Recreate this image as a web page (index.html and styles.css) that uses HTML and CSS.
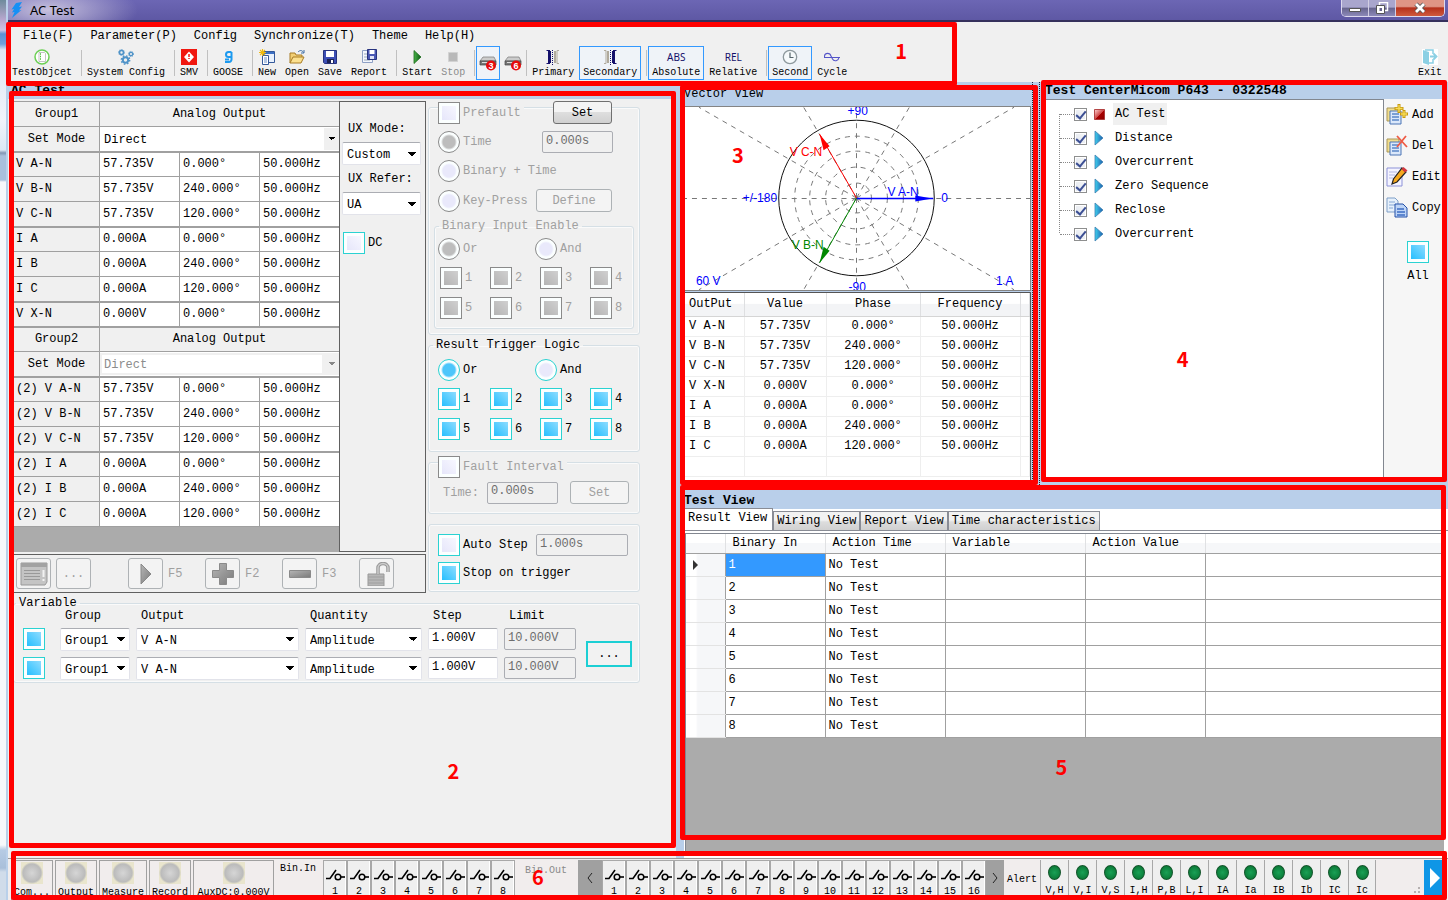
FILE: index.html
```html
<!DOCTYPE html>
<html lang="en">
<head>
<meta charset="utf-8">
<title>AC Test</title>
<link rel="stylesheet" href="styles.css">
</head>
<body>
<svg class="defs" aria-hidden="true">
  <defs>
    <linearGradient id="gPlay" x1="0" x2="1"><stop offset="0" stop-color="#3fd0ee"/><stop offset="1" stop-color="#1d5fae"/></linearGradient>
    <linearGradient id="gStart" x1="0" x2="1"><stop offset="0" stop-color="#49b449"/><stop offset="1" stop-color="#0a5a14"/></linearGradient>
    <linearGradient id="gGrey" x1="0" y1="0" x2="1" y2="1"><stop offset="0" stop-color="#b5b5b5"/><stop offset="1" stop-color="#7a7a7a"/></linearGradient>
    <linearGradient id="gRed" x1="0" y1="0" x2="1" y2="1"><stop offset="0" stop-color="#ffd9d9"/><stop offset=".5" stop-color="#d04848"/><stop offset=".52" stop-color="#a80000"/><stop offset="1" stop-color="#8a0000"/></linearGradient>
    <symbol id="switch" viewBox="0 0 20 14"><path d="M1 10.500h4L11 2" fill="none" stroke="#000" stroke-width="1.6"/><circle cx="13" cy="9" r="2.800" fill="none" stroke="#000" stroke-width="1.500"/><path d="M16 9h4" stroke="#000" stroke-width="1.600"/></symbol>
    <symbol id="play" viewBox="0 0 10 16"><path d="M1 1v14l8-7z" fill="url(#gPlay)" stroke="#3d7fb0" stroke-width=".8"/></symbol>
    <symbol id="pages" viewBox="0 0 22 22"><path d="M1 4h12v13H1z" fill="#f1dd8c" stroke="#a9975a"/><path d="M4 7h11v13H4z" fill="#dbe8fa" stroke="#4b74b5"/><path d="M6 10h7M6 13h7M6 16h7" stroke="#5b86c7" stroke-width="1.500"/></symbol>
    <symbol id="drive" viewBox="0 0 18 16"><path d="M4 2h11l2 4H1z" fill="#ccc" stroke="#777" stroke-width=".7"/><path d="M1 6h16v4H1z" fill="#777" stroke="#444" stroke-width=".7"/><path d="M3 7.500h6" stroke="#ddd"/><circle cx="12" cy="10.500" r="5" fill="#e60b0b"/></symbol>
  </defs>
</svg>

<div class="desktop">
  <div class="edge"></div>
  <div class="window">
    <header class="titlebar">
      <svg class="bolt" viewBox="0 0 12 16"><path d="M5 1l6-1-3 5 3-.5-3 4 2.500-.5L1 16l2.500-6L1 10.500 3 7 .5 7.500z" fill="#1690f5"/></svg>
      <h1 class="title">AC Test</h1>
      <div class="winbtns">
        <button class="wb" aria-label="Minimize"><svg viewBox="0 0 14 12"><path d="M1.500 6.500h11v3h-11z" fill="#fff" stroke="#555"/></svg></button>
        <button class="wb wb-mid" aria-label="Restore"><svg viewBox="0 0 14 12"><path d="M4.500.5h8v8h-8z" fill="none" stroke="#fff" stroke-width="1.500"/><path d="M1.500 3.500h8v8h-8z" fill="#fff" stroke="#555"/><path d="M4.500 6h2.500v3H4.500z" fill="#67648e"/></svg></button>
        <button class="wb wb-close" aria-label="Close"><svg viewBox="0 0 14 12"><path d="M3 2l8 8M11 2l-8 8" stroke="#555" stroke-width="4.500"/><path d="M3 2l8 8M11 2l-8 8" stroke="#fff" stroke-width="2.800"/></svg></button>
      </div>
    </header>

    <section class="top">
      <nav class="menu">
        <button>File(F)</button><button>Parameter(P)</button><button>Config</button><button>Synchronize(T)</button><button>Theme</button><button>Help(H)</button>
      </nav>
      <div class="toolbar">
        <button class="tool"><svg viewBox="0 0 16 16"><circle cx="8" cy="8" r="7" fill="#fff" stroke="#6ccf55" stroke-width="1.500"/><path d="M5 3.500h5.500l1 1v8H5z" fill="#fff" stroke="#aaa" stroke-width=".7"/><path d="M6 5h1M6 7.500h1M6 10h1" stroke="#4bbf3a" stroke-width="1.500"/></svg>TestObjcet</button>
        <i class="sep"></i>
        <button class="tool"><svg viewBox="0 0 16 16" fill="none" stroke="#4f93c8"><circle cx="3.500" cy="3.500" r="2" stroke-width="1.600"/><circle cx="3.500" cy="3.500" r="3" stroke-dasharray="1 1.300"/><circle cx="13" cy="5" r="1.700" stroke-width="1.300"/><circle cx="13" cy="5" r="2.600" stroke-dasharray="1 1.100"/><circle cx="7.500" cy="11" r="2.700" stroke-width="2"/><circle cx="7.500" cy="11" r="4.200" stroke-dasharray="1.600 1.700" stroke-width="1.400"/></svg>System Config</button>
        <i class="sep"></i>
        <button class="tool"><svg viewBox="0 0 16 16"><path d="M0 0h16v16H0z" fill="#f0170f"/><path d="M8 2.500L13 8l-5 5.500L3 8z" fill="#fff"/><path d="M8 5v6" stroke="#f0170f" stroke-width="1.500" stroke-dasharray="3 1 1 1"/></svg>SMV</button>
        <i class="sep"></i>
        <button class="tool"><svg viewBox="0 0 16 16"><path d="M11.500 3H8.500a2.500 2.500 0 0 0 0 5h3M11.500 3v7.500a2.500 2.500 0 0 1-2.500 2.500H5M5 10.500h4" fill="none" stroke="#1c9af0" stroke-width="2"/></svg>GOOSE</button>
        <i class="sep"></i>
        <button class="tool"><svg viewBox="0 0 16 16"><path d="M4.500 2.500h11v11h-11z" fill="#e8f1fd" stroke="#34599a"/><path d="M5 3h10v2H5z" fill="#3b6fc4"/><path d="M3.500 6.500h6v9h-6z" fill="#fff" stroke="#34599a"/><path d="M5 9h3M5 11h3M5 13h3" stroke="#6b8fc7"/><path d="M3.500 0v7M0 3.500h7M1 1l5 5M6 1L1 6" stroke="#f0b90c" stroke-width="1.100"/></svg>New</button>
        <button class="tool"><svg viewBox="0 0 16 16"><path d="M1 14V4h5l1 2h6v2" fill="#f2cf74" stroke="#a87c26"/><path d="M1 14l3-6h11l-3 6z" fill="#fbe08f" stroke="#a87c26"/><path d="M9 3c2-2 4-2 5.500.5M15 1v3h-3" fill="none" stroke="#3c6da5"/></svg>Open</button>
        <button class="tool"><svg viewBox="0 0 16 16"><path d="M1.500 1.500h13v13h-12l-1-1z" fill="#3d4fb5" stroke="#27337e"/><path d="M4 2h8v6H4z" fill="#fff"/><path d="M5 10h7v4H5z" fill="#1b2254"/><path d="M9 11h2v3H9z" fill="#fff"/></svg>Save</button>
        <button class="tool"><svg viewBox="0 0 16 16"><path d="M1.500 1.500h10v12h-10z" fill="#f3f6fc" stroke="#8ea0c4"/><path d="M3 5h3M3 8h4M3 11h6" stroke="#9ab"/><path d="M6.500.5h9v10h-9z" fill="#4a58b4" stroke="#27337e"/><path d="M8.500 1h5v4h-5z" fill="#fff"/><path d="M9 7h4v3H9z" fill="#dfe3f5"/></svg>Report</button>
        <i class="sep"></i>
        <button class="tool"><svg viewBox="0 0 16 16"><path d="M5 1.500v13l7-6.500z" fill="url(#gStart)" stroke="#1a6a1a" stroke-width=".8"/></svg>Start</button>
        <button class="tool" disabled><svg viewBox="0 0 16 16"><path d="M3.500 3.500h9v9h-9z" fill="#b9b9b9" stroke="#d2d2d2"/></svg>Stop</button>
        <i class="sep"></i>
        <button class="tool tool-drive on" aria-label="3 phase"><svg viewBox="0 0 18 16"><use href="#drive"/><text x="12" y="14" class="drive-no">3</text></svg></button>
        <button class="tool tool-drive" aria-label="6 phase"><svg viewBox="0 0 18 16"><use href="#drive"/><text x="12" y="14" class="drive-no">6</text></svg></button>
        <i class="sep tight"></i>
        <button class="tool"><svg viewBox="0 0 16 16"><path d="M1.500 1.500H5M1.500 14.500H5" stroke="#14106b"/><path d="M4.500 2v12" stroke="#14106b" stroke-width="3"/><path d="M7.500 1v15" stroke="#14106b" stroke-dasharray="1 1"/><path d="M10 2v12" stroke="#b0aa9c" stroke-width="2"/><path d="M14 1.500h-2v13h2" fill="none" stroke="#b0aa9c"/></svg>Primary</button>
        <button class="tool on"><svg viewBox="0 0 16 16"><path d="M2 1.500h2v13H2" fill="none" stroke="#b0aa9c"/><path d="M6 2v12" stroke="#b0aa9c" stroke-width="2"/><path d="M8.500 1v15" stroke="#14106b" stroke-dasharray="1 1"/><path d="M11.500 2v12" stroke="#14106b" stroke-width="3"/><path d="M11 1.500h3.500M11 14.500h3.500" stroke="#14106b"/></svg>Secondary</button>
        <i class="sep"></i>
        <button class="tool on"><span class="word">ABS</span>Absolute</button>
        <button class="tool"><span class="word">REL</span>Relative</button>
        <i class="sep"></i>
        <button class="tool on"><svg viewBox="0 0 16 16"><circle cx="8" cy="8" r="6.700" fill="#f5f9fb" stroke="#8d989d" stroke-width="1.300"/><path d="M8 3.500V8.500h3.500" fill="none" stroke="#56646b" stroke-width="1.200"/></svg>Second</button>
        <button class="tool"><svg viewBox="0 0 16 16"><path d="M.5 8.500V7C1 3.500 6 3.500 7 7l1.500 3c1.500 3 6 2 6.500-1.500M0 8.500h16" fill="none" stroke="#5555c8" stroke-width="1.100"/></svg>Cycle</button>
        <button class="tool exit"><svg viewBox="0 0 16 16"><path d="M0 0h16v16H0z" fill="#fff"/><path d="M1 1l6 2v13l-6-2z" fill="#8bd0e4"/><path d="M3 1h8v4M11 10v4H7" fill="none" stroke="#8bd0e4" stroke-width="1.500"/><path d="M8 7.500h5M11.500 4.500l3 3-3 3" fill="none" stroke="#8bd0e4" stroke-width="1.800"/></svg>Exit</button>
      </div>
      <div class="frame frame-1"><b>1</b></div>
    </section>

    <main class="main">
      <section class="pane left">
        <h2 class="bar">AC Test</h2>
        <div class="left-body">
          <div class="col-a">
            <div class="analog">
              <div class="grid-wrap">
                <table class="ana">
                  <colgroup><col class="c0"><col class="c1"><col class="c1"><col class="c1"></colgroup>
                  <tr><th class="mid">Group1</th><th class="mid" colspan="3">Analog Output</th></tr>
                  <tr class="thick"><th class="mid"><label for="m1">Set Mode</label></th><td colspan="3" class="modecell"><select id="m1" class="mode"><option>Direct</option></select></td></tr>
                  <tr><th>V A-N</th><td>57.735V</td><td>0.000°</td><td>50.000Hz</td></tr>
                  <tr><th>V B-N</th><td>57.735V</td><td>240.000°</td><td>50.000Hz</td></tr>
                  <tr class="thick"><th>V C-N</th><td>57.735V</td><td>120.000°</td><td>50.000Hz</td></tr>
                  <tr><th>I A</th><td>0.000A</td><td>0.000°</td><td>50.000Hz</td></tr>
                  <tr><th>I B</th><td>0.000A</td><td>240.000°</td><td>50.000Hz</td></tr>
                  <tr class="thick"><th>I C</th><td>0.000A</td><td>120.000°</td><td>50.000Hz</td></tr>
                  <tr class="thick"><th>V X-N</th><td>0.000V</td><td>0.000°</td><td>50.000Hz</td></tr>
                  <tr><th class="mid">Group2</th><th class="mid" colspan="3">Analog Output</th></tr>
                  <tr class="thick"><th class="mid"><label for="m2">Set Mode</label></th><td colspan="3" class="modecell"><select id="m2" class="mode" disabled><option>Direct</option></select></td></tr>
                  <tr><th>(2) V A-N</th><td>57.735V</td><td>0.000°</td><td>50.000Hz</td></tr>
                  <tr><th>(2) V B-N</th><td>57.735V</td><td>240.000°</td><td>50.000Hz</td></tr>
                  <tr class="thick"><th>(2) V C-N</th><td>57.735V</td><td>120.000°</td><td>50.000Hz</td></tr>
                  <tr><th>(2) I A</th><td>0.000A</td><td>0.000°</td><td>50.000Hz</td></tr>
                  <tr><th>(2) I B</th><td>0.000A</td><td>240.000°</td><td>50.000Hz</td></tr>
                  <tr><th>(2) I C</th><td>0.000A</td><td>120.000°</td><td>50.000Hz</td></tr>
                </table>
              </div>
              <div class="ux">
                <label for="uxm">UX Mode:</label>
                <select id="uxm" class="sel"><option>Custom</option></select>
                <label for="uxr">UX Refer:</label>
                <select id="uxr" class="sel"><option>UA</option></select>
                <label class="ck dc"><input type="checkbox">DC</label>
              </div>
            </div>
            <div class="actions">
              <button class="act" disabled aria-label="Details"><svg viewBox="0 0 28 24"><path d="M1 1h26v19l-2 3H1z" fill="#c4c4c4" stroke="#999"/><path d="M1 1h26v4H1z" fill="#a2a2a2"/><path d="M4 8.500h16M4 11.500h16M4 14.500h16M4 17.500h16" stroke="#999"/><path d="M23.500 8v7M23.500 17v2" stroke="#f1f1f1" stroke-width="2"/></svg></button>
              <button class="act" disabled>...</button>
              <span class="pair first"><button class="act" disabled aria-label="Run"><svg viewBox="0 0 28 24"><path d="M9 2v20l10-10z" fill="url(#gGrey)" stroke="#888"/></svg></button>F5</span>
              <span class="pair"><button class="act" disabled aria-label="Increase"><svg viewBox="0 0 28 24"><path d="M10.500 1.500h7v7h7v7h-7v7h-7v-7h-7v-7h7z" fill="url(#gGrey)" stroke="#8a8a8a"/></svg></button>F2</span>
              <span class="pair"><button class="act" disabled aria-label="Decrease"><svg viewBox="0 0 28 24"><path d="M3.500 8.500h21v7h-21z" fill="url(#gGrey)" stroke="#8a8a8a"/></svg></button>F3</span>
              <button class="act" disabled aria-label="Unlock"><svg viewBox="0 0 28 24"><path d="M5 12h16v12H5z" fill="#b7b7b7" stroke="#999"/><path d="M5 15h16M5 18h16M5 21h16" stroke="#9f9f9f"/><path d="M15 12V6a5 4.500 0 0 1 10 0v4" fill="none" stroke="#999" stroke-width="3.500"/><path d="M15 12V6a5 4.500 0 0 1 10 0v4" fill="none" stroke="#ccc" stroke-width="1.500"/></svg></button>
            </div>
          </div>

          <div class="col-b">
            <div class="group g-pre">
              <div class="row headrow"><label class="ck off w82"><input type="checkbox" disabled>Prefault</label><button class="btn w59">Set</button></div>
              <div class="row"><label class="rd off w104"><input type="radio" name="pre" checked disabled>Time</label><input class="txt w71" type="text" value="0.000s" aria-label="Prefault time" disabled></div>
              <div class="row"><label class="rd off"><input type="radio" name="pre" disabled>Binary + Time</label></div>
              <div class="row"><label class="rd off w98"><input type="radio" name="pre" disabled>Key-Press</label><button class="btn w76" disabled>Define</button></div>
              <fieldset class="inner">
                <legend>Binary Input Enable</legend>
                <div class="pairrow"><label class="rd off"><input type="radio" name="bi" checked disabled>Or</label><label class="rd off"><input type="radio" name="bi" disabled>And</label></div>
                <div class="boxes off">
                  <label class="ck"><input type="checkbox" checked disabled>1</label><label class="ck"><input type="checkbox" checked disabled>2</label><label class="ck"><input type="checkbox" checked disabled>3</label><label class="ck"><input type="checkbox" checked disabled>4</label>
                  <label class="ck"><input type="checkbox" checked disabled>5</label><label class="ck"><input type="checkbox" checked disabled>6</label><label class="ck"><input type="checkbox" checked disabled>7</label><label class="ck"><input type="checkbox" checked disabled>8</label>
                </div>
              </fieldset>
            </div>
            <fieldset class="group g-res">
              <legend>Result Trigger Logic</legend>
              <div class="pairrow"><label class="rd"><input type="radio" name="rt" checked>Or</label><label class="rd"><input type="radio" name="rt">And</label></div>
              <div class="boxes">
                <label class="ck"><input type="checkbox" checked>1</label><label class="ck"><input type="checkbox" checked>2</label><label class="ck"><input type="checkbox" checked>3</label><label class="ck"><input type="checkbox" checked>4</label>
                <label class="ck"><input type="checkbox" checked>5</label><label class="ck"><input type="checkbox" checked>6</label><label class="ck"><input type="checkbox" checked>7</label><label class="ck"><input type="checkbox" checked>8</label>
              </div>
            </fieldset>
            <div class="group g-fault">
              <div class="row headrow"><label class="ck off"><input type="checkbox" disabled>Fault Interval</label></div>
              <div class="row faultrow"><label class="off" for="ft">Time:</label><input id="ft" class="txt w71" type="text" value="0.000s" disabled><button class="btn w59" disabled>Set</button></div>
            </div>
            <div class="group g-auto">
              <div class="row"><label class="ck w98"><input type="checkbox">Auto Step</label><input class="txt w92" type="text" value="1.000s" aria-label="Auto step time" disabled></div>
              <div class="row"><label class="ck"><input type="checkbox" checked>Stop on trigger</label></div>
            </div>
          </div>
        </div>

        <fieldset class="variable">
          <legend>Variable</legend>
          <div class="vgrid">
            <span></span><span>Group</span><span>Output</span><span>Quantity</span><span>Step</span><span>Limit</span><span></span>
            <label class="ck"><input type="checkbox" checked aria-label="Variable 1"></label>
            <select class="sel" aria-label="Group"><option>Group1</option></select>
            <select class="sel" aria-label="Output"><option>V A-N</option></select>
            <select class="sel" aria-label="Quantity"><option>Amplitude</option></select>
            <input class="txt plain" type="text" value="1.000V" aria-label="Step">
            <input class="txt" type="text" value="10.000V" aria-label="Limit" disabled>
            <label class="ck"><input type="checkbox" checked aria-label="Variable 2"></label>
            <select class="sel" aria-label="Group"><option>Group1</option></select>
            <select class="sel" aria-label="Output"><option>V A-N</option></select>
            <select class="sel" aria-label="Quantity"><option>Amplitude</option></select>
            <input class="txt plain" type="text" value="1.000V" aria-label="Step">
            <input class="txt" type="text" value="10.000V" aria-label="Limit" disabled>
            <button class="more">...</button>
          </div>
        </fieldset>
        <div class="frame frame-2"><b>2</b></div>
      </section>

      <div class="right">
        <div class="upper">
          <section class="pane vector">
            <h2 class="bar bar-tall">Vector View</h2>
            <svg class="plot" viewBox="0 0 347 183">
              <g fill="none" stroke="#777" stroke-dasharray="5 5">
                <circle cx="173" cy="91" r="15"/><circle cx="173" cy="91" r="31"/><circle cx="173" cy="91" r="47"/><circle cx="173" cy="91" r="62"/>
                <path d="M173 91.500H347M173 91.500H0M173 91V0M173 91V183M173 91L331 0M173 91L15 0M173 91L331 183M173 91L15 183M173 91L226 0M173 91L120 0M173 91L226 183M173 91L120 183"/>
              </g>
              <circle cx="173" cy="91" r="78" fill="none" stroke="#111"/>
              <path d="M173 91.500H250" stroke="#00f" stroke-width="1.500"/><path d="M249 91.500l-17-3v6z" fill="#00f"/>
              <path d="M173 91L136 27" stroke="#f00"/><path d="M136 27l10 12-6 4z" fill="#f00"/>
              <path d="M173 91L136 156" stroke="#080"/><path d="M136 156l10-12-6-4z" fill="#080"/>
              <g class="deg">
                <text x="164" y="8">+90</text><text x="165" y="184">-90</text><text x="59" y="95">+/-180</text><text x="258" y="95">0</text><text x="12" y="178">60 V</text><text x="313" y="178">1 A</text><text x="204" y="89">V A-N</text>
                <text x="106" y="49" class="red">V C-N</text><text x="108" y="142" class="green">V B-N</text>
              </g>
            </svg>
            <div class="vlist">
              <table class="vt">
                <colgroup><col class="v0"><col class="v1"><col class="v2"><col class="v3"><col></colgroup>
                <tr><th class="l">OutPut</th><th>Value</th><th>Phase</th><th>Frequency</th><th></th></tr>
                <tr><td class="l">V A-N</td><td>57.735V</td><td>0.000°</td><td>50.000Hz</td><td></td></tr>
                <tr><td class="l">V B-N</td><td>57.735V</td><td>240.000°</td><td>50.000Hz</td><td></td></tr>
                <tr><td class="l">V C-N</td><td>57.735V</td><td>120.000°</td><td>50.000Hz</td><td></td></tr>
                <tr><td class="l">V X-N</td><td>0.000V</td><td>0.000°</td><td>50.000Hz</td><td></td></tr>
                <tr><td class="l">I A</td><td>0.000A</td><td>0.000°</td><td>50.000Hz</td><td></td></tr>
                <tr><td class="l">I B</td><td>0.000A</td><td>240.000°</td><td>50.000Hz</td><td></td></tr>
                <tr><td class="l">I C</td><td>0.000A</td><td>120.000°</td><td>50.000Hz</td><td></td></tr>
                <tr><td></td><td></td><td></td><td></td><td></td></tr>
              </table>
            </div>
            <div class="frame frame-3"><b>3</b></div>
          </section>
          <section class="pane center">
            <h2 class="bar">Test CenterMicom P643 - 0322548</h2>
            <div class="center-body">
              <ul class="tree">
                <li><label><input type="checkbox" checked><svg viewBox="0 0 12 12" class="stopico"><path d="M.5.5h11v11H.5z" fill="url(#gRed)" stroke="#a33"/></svg><span class="cur">AC Test</span></label></li>
                <li><label><input type="checkbox" checked><svg class="playico"><use href="#play"/></svg><span>Distance</span></label></li>
                <li><label><input type="checkbox" checked><svg class="playico"><use href="#play"/></svg><span>Overcurrent</span></label></li>
                <li><label><input type="checkbox" checked><svg class="playico"><use href="#play"/></svg><span>Zero Sequence</span></label></li>
                <li><label><input type="checkbox" checked><svg class="playico"><use href="#play"/></svg><span>Reclose</span></label></li>
                <li><label><input type="checkbox" checked><svg class="playico"><use href="#play"/></svg><span>Overcurrent</span></label></li>
              </ul>
              <div class="side">
                <button><svg viewBox="0 0 22 22"><use href="#pages"/><path d="M13 0v9M8.500 4.500h9M18 6v8M14 10h8" stroke="#c79a10" stroke-width="3"/><path d="M13 1v7M9.500 4.500h7M18 7v6M15 10h6" stroke="#f7dc55" stroke-width="1.300"/></svg>Add</button>
                <button><svg viewBox="0 0 22 22"><use href="#pages"/><path d="M11 1l10 11M20 1l-9 11" stroke="#ee5b45" stroke-width="1.800"/></svg>Del</button>
                <button><svg viewBox="0 0 22 22"><path d="M1 2h15v18H1z" fill="#f4f4ff" stroke="#8d92d8"/><path d="M3 6h8M3 9h6M3 12h4" stroke="#b4b8e2"/><path d="M16 2l4 4-9 10-5 2 1.500-5z" fill="#f6a91e" stroke="#222" stroke-width="1.200"/><path d="M15.500 3l2-2 4 3.500-2.500 2z" fill="#d2383e"/></svg>Edit</button>
                <button><svg viewBox="0 0 22 22"><path d="M1 1h8l3 3v11H1z" fill="#e6f0fb" stroke="#7f9fc8"/><path d="M3 5h6M3 8h6M3 11h4" stroke="#86a8d6"/><path d="M9 7h8l4 4v9H9z" fill="#bdd4f6" stroke="#2450a8"/><path d="M11 12h7M11 15h8M11 18h8" stroke="#3c6cc4" stroke-width="1.500"/></svg>Copy</button>
                <label class="all"><input type="checkbox" checked>All</label>
              </div>
            </div>
            <div class="frame frame-4"><b>4</b></div>
          </section>
        </div>
        <section class="pane view">
          <h2 class="bar bar-view">Test View</h2>
          <div class="tabs"><button class="cur">Result View</button><button>Wiring View</button><button>Report View</button><button>Time characteristics</button></div>
          <div class="results">
            <table class="rt">
              <colgroup><col class="r0"><col class="r1"><col class="r2"><col class="r3"><col class="r2"><col></colgroup>
              <tr><th></th><th>Binary In</th><th>Action Time</th><th>Variable</th><th>Action Value</th><th></th></tr>
              <tr><th><svg class="ptr" viewBox="0 0 5 10"><path d="M0 0v10l5-5z" fill="#333"/></svg></th><td class="hit">1</td><td>No Test</td><td></td><td></td><td></td></tr>
              <tr><th></th><td>2</td><td>No Test</td><td></td><td></td><td></td></tr>
              <tr><th></th><td>3</td><td>No Test</td><td></td><td></td><td></td></tr>
              <tr><th></th><td>4</td><td>No Test</td><td></td><td></td><td></td></tr>
              <tr><th></th><td>5</td><td>No Test</td><td></td><td></td><td></td></tr>
              <tr><th></th><td>6</td><td>No Test</td><td></td><td></td><td></td></tr>
              <tr><th></th><td>7</td><td>No Test</td><td></td><td></td><td></td></tr>
              <tr><th></th><td>8</td><td>No Test</td><td></td><td></td><td></td></tr>
            </table>
          </div>
          <div class="frame frame-5"><b>5</b></div>
        </section>
      </div>
    </main>

    <footer class="status">
      <div class="leds">
        <span class="led"><i></i>Com...</span><span class="led"><i></i>Output</span><span class="led"><i></i>Measure</span><span class="led"><i></i>Record</span><span class="led wide"><i></i>AuxDC:0.000V</span>
      </div>
      <span class="binlabel">Bin.In</span>
      <div class="bins">
        <span><svg><use href="#switch"/></svg>1</span><span><svg><use href="#switch"/></svg>2</span><span><svg><use href="#switch"/></svg>3</span><span><svg><use href="#switch"/></svg>4</span><span><svg><use href="#switch"/></svg>5</span><span><svg><use href="#switch"/></svg>6</span><span><svg><use href="#switch"/></svg>7</span><span><svg><use href="#switch"/></svg>8</span>
      </div>
      <span class="binlabel out">Bin.Out</span>
      <button class="nav" aria-label="Previous"><svg viewBox="0 0 6 10"><path d="M5 0L1 5l4 5" fill="none" stroke="#222"/></svg></button>
      <div class="bins">
        <span><svg><use href="#switch"/></svg>1</span><span><svg><use href="#switch"/></svg>2</span><span><svg><use href="#switch"/></svg>3</span><span><svg><use href="#switch"/></svg>4</span><span><svg><use href="#switch"/></svg>5</span><span><svg><use href="#switch"/></svg>6</span><span><svg><use href="#switch"/></svg>7</span><span><svg><use href="#switch"/></svg>8</span><span><svg><use href="#switch"/></svg>9</span><span><svg><use href="#switch"/></svg>10</span><span><svg><use href="#switch"/></svg>11</span><span><svg><use href="#switch"/></svg>12</span><span><svg><use href="#switch"/></svg>13</span><span><svg><use href="#switch"/></svg>14</span><span><svg><use href="#switch"/></svg>15</span><span><svg><use href="#switch"/></svg>16</span>
      </div>
      <button class="nav next" aria-label="Next"><svg viewBox="0 0 6 10"><path d="M1 0l4 5-4 5" fill="none" stroke="#222"/></svg></button>
      <span class="alert">Alert</span>
      <div class="lamps">
        <span><i></i>V,H</span><span><i></i>V,I</span><span><i></i>V,S</span><span><i></i>I,H</span><span><i></i>P,B</span><span><i></i>L,I</span><span><i></i>IA</span><span><i></i>Ia</span><span><i></i>IB</span><span><i></i>Ib</span><span><i></i>IC</span><span><i></i>Ic</span>
      </div>
      <svg class="grip" viewBox="0 0 11 11"><path d="M8 0h2v2H8zM4 4h2v2H4zM8 4h2v2H8zM0 8h2v2H0zM4 8h2v2H4zM8 8h2v2H8z" fill="#b5b0b0"/></svg>
      <button class="expand" aria-label="Expand"><svg viewBox="0 0 12 20"><path d="M1 0v20l10-10z" fill="#fff"/></svg></button>
      <div class="frame frame-6"><b>6</b></div>
    </footer>
  </div>
</div>
</body>
</html>
```
FILE: styles.css
```css
* { box-sizing: border-box; }
body {
  margin: 0;
  font-family: "Liberation Mono", monospace;
  font-size: 12px;
  line-height: 16px;
  color: #000;
  background: #f0f0f0;
}
button, input, select { font: inherit; color: inherit; margin: 0; border-radius: 0; }
button { padding: 0; border: 0; background: none; white-space: nowrap; }
h1, h2, ul { margin: 0; padding: 0; }
table { border-collapse: collapse; table-layout: fixed; width: 100%; }
th { font-weight: normal; text-align: left; }
.defs { position: absolute; width: 0; height: 0; }

.desktop { display: flex; height: 100vh; overflow: hidden; }
.edge {
  flex: none;
  width: 8px;
  border-right: 2px solid #b9d0ea;
  background: linear-gradient(#6e8b9c 0, #b9a8cf 20px, #cfc3e2 30px, #5c8fd0 34px, #6fa0da 44px, #dfe6f4 50px, #f1f4fb 120px, #dce8f5 150px, #8296b4 153px, #a9c0dc 156px, #a9c0dc 180px, #f6f8fb 182px, #f6f8fb 845px, #b6cbe4 850px, #a9bfda 868px, #d0dcea 872px);
}
.window { flex: 1; min-width: 0; display: flex; flex-direction: column; }

/* Title bar */
.titlebar {
  flex: none;
  display: flex;
  align-items: center;
  height: 22px;
  gap: 7px;
  padding-left: 3px;
  background: radial-gradient(ellipse 90px 30px at 40px 10px, #c6c0dd, transparent), linear-gradient(#6c66b4, #5e58a4);
  border-bottom: 2px solid #35305c;
}
.bolt { width: 12px; height: 16px; }
.title { flex: 1; font: 13px/20px "Noto Sans", sans-serif; }
.winbtns { display: flex; align-self: flex-start; margin-right: 3px; border: 1px solid #dcd8ee; border-top: 0; border-radius: 0 0 5px 5px; overflow: hidden; }
.wb { display: grid; place-items: center; width: 27px; height: 16px; background: linear-gradient(#a9a6cd 45%, #67648e 50%, #8c89b8); border-right: 1px solid #d2cfe4; }
.wb svg { width: 14px; height: 12px; }
.wb-close { width: 48px; border: 0; background: linear-gradient(#df9585 40%, #b5311c 50%, #cf5a3e); }

/* Menu and toolbar */
.top { position: relative; flex: none; height: 60px; padding-top: 4px; }
.menu { display: flex; gap: 17px; padding-left: 15px; height: 20px; }
.toolbar { display: flex; align-items: stretch; gap: 1px; height: 34px; }
.tool { flex: none; display: flex; flex-direction: column; align-items: center; justify-content: flex-start; padding: 2px 3px 0; border: 1px solid transparent; font-size: 10px; line-height: 12px; }
.tool svg { width: 16px; height: 16px; margin-bottom: 2px; }
.tool:disabled { color: #8b8b8b; }
.tool.on { border-color: #3399ff; background: #eff3f8; }
.word { font: 10px/16px "Noto Sans", sans-serif; color: #14106b; margin-bottom: 2px; }
.tool-drive { width: 24px; justify-content: center; padding: 0; }
.tool-drive svg { width: 18px; height: 16px; margin: 0; }
.drive-no { font: bold 9px "Liberation Sans", sans-serif; fill: #fff; text-anchor: middle; }
.sep { flex: none; width: 1px; margin: 4px 0 4px 4px; background: #c0c0c0; }
.sep.tight { margin-left: 0; }
.exit { margin: 0 2px 0 auto; }

/* Numbered callouts */
.frame { position: absolute; z-index: 5; border: 5px solid #f00; border-radius: 2px; pointer-events: none; }
.frame b { position: absolute; font: bold 20px/24px "Noto Sans CJK SC", sans-serif; color: #f00; }
.frame-1 { inset: 0 auto -4px -2px; width: 951px; }
.frame-1 b { right: 45px; top: 12px; }
.frame-2 { inset: 9px 0 10px 1px; }
.frame-2 b { left: 66%; bottom: 60px; }
.frame-3 { inset: 3px 0 0 -4px; }
.frame-3 b { left: 47px; top: 53px; }
.frame-4 { inset: -2px 1px 3px 0; }
.frame-4 b { left: 33%; top: 262px; }
.frame-5 { inset: 0 2px 18px -4px; }
.frame-5 b { left: 49%; top: 265px; }
.frame-6 { inset: -8px 1px 0 3px; }
.frame-6 b { left: 516px; top: 9px; }

/* Panes */
.main { flex: 1; min-height: 0; display: flex; background: #b9cfea; }
.pane { position: relative; }
.bar { height: 17px; font-size: 13px; line-height: 17px; background: #b9cfea; white-space: nowrap; }
.left { flex: none; width: 668px; background: #f0f0f0; }
.left .bar { padding-left: 3px; }
.left-body { display: flex; gap: 2px; padding: 2px 0 0 5px; }
.col-a { width: 413px; }
.analog { display: flex; height: 451px; }
.grid-wrap { width: 326px; background: #ababab; }
.ux { flex: 1; display: flex; flex-direction: column; border: 1px solid #606060; padding: 19px 4px 0 2px; }
.ux label { padding-left: 6px; }
.ux .sel { margin: 5px 0 6px; }
.ux .dc { padding-left: 1px; margin-top: 11px; }

/* Analog output table */
.ana tr { height: 25px; }
.c0 { width: 86px; }
.c1 { width: 80px; }
.ana th, .ana td { border: 1px solid #a0a0a0; padding: 0 3px; }
.ana th { background: #f0f0f0; padding: 0 2px; }
.ana td { background: #fff; }
.ana .mid { text-align: center; }
.ana .thick > * { border-bottom: 2px solid #a0a0a0; }
.ana .modecell { padding: 0; }
.mode { display: block; width: 100%; height: 22px; padding: 2px 4px 0; border: 0; appearance: none; background: conic-gradient(from -45deg at 50% 100%, #000 90deg, transparent 0) right 4px center / 6px 3px no-repeat, linear-gradient(#f0f0f0, #f0f0f0) right / 15px 100% no-repeat, #fff; }
.mode:disabled { color: #8c8c8c; opacity: 1; border: 2px solid #f0f0f0; padding: 2px 2px 0; background: conic-gradient(from -45deg at 50% 100%, #888 90deg, transparent 0) right 2px center / 6px 3px no-repeat, linear-gradient(#f0f0f0, #f0f0f0) right / 15px 100% no-repeat, #fff; }

/* Form controls */
.sel { height: 23px; width: 100%; min-width: 0; padding: 3px 4px 0; border: 1px solid #e2e3ea; border-top-color: #abadb3; border-radius: 2px; appearance: none; background: conic-gradient(from -45deg at 50% 100%, #000 90deg, transparent 0) right 4px center / 8px 4px no-repeat, #fff; }
.ck, .rd { display: flex; align-items: center; gap: 3px; white-space: nowrap; }
.off { color: #a0a0a0; }
.ck input, .all input { flex: none; width: 22px; height: 22px; padding: 3px; appearance: none; border: 1px solid #2ad2d2; background: linear-gradient(45deg, #e6e6fa, #f7f7ff) content-box, #fbffff; }
.ck input:checked, .all input:checked { background: linear-gradient(45deg, #26bfff, #8edcff) content-box, #fbffff; }
.ck input:disabled { border-color: #8a8a8a; }
.ck input:checked:disabled { background: linear-gradient(45deg, #b4b4b4, #d0d0d0) content-box, #fbffff; }
.rd input { flex: none; width: 22px; height: 22px; padding: 3px; appearance: none; border: 1px solid #2ad2d2; border-radius: 50%; background: radial-gradient(circle, #e9e9fb 6px, #fbffff 8px); }
.rd input:checked { background: radial-gradient(circle, #4dc6fb 6px, #fbffff 8px); }
.rd input:disabled { border-color: #8a8a8a; }
.rd input:checked:disabled { background: radial-gradient(circle, #bdbdbd 6px, #fbffff 8px); }
.txt { height: 22px; min-width: 0; padding: 0 3px 3px; border: 1px solid #abadb3; border-radius: 2px; background: #fff; }
.txt:disabled { color: #6d6d6d; background: #f0f0f0; }
.txt.plain { border-color: #abadb3 #e2e3ea #e2e3ea; }
.btn { height: 23px; border: 1px solid #707070; border-radius: 3px; background: linear-gradient(#f4f4f4 48%, #dedede 50%, #d0d0d0); }
.btn:disabled { color: #a0a0a0; border-color: #adb2b5; background: #f4f4f4; }

.actions { display: flex; align-items: center; gap: 5px; height: 39px; margin-top: 2px; padding-left: 2px; border: 1px solid #606060; color: #a0a0a0; }
.act { flex: none; width: 35px; height: 31px; border: 1px solid #aeb2b5; border-radius: 3px; background: #f3f3f3; color: #a0a0a0; }
.act svg { display: block; width: 28px; height: 24px; margin: auto; }
.pair { display: flex; align-items: center; gap: 5px; width: 72px; }
.pair.first { margin-left: 32px; }

/* Trigger groups */
.group { width: 212px; margin: 0; padding: 0 0 0 9px; border: 1px solid #d5dfe5; border-radius: 3px; box-shadow: inset 0 0 0 1px #fafafa; }
legend { padding: 0 3px; line-height: 16px; }
.row { display: flex; align-items: center; }
.headrow { margin-top: -7px; }
.headrow label { padding-right: 3px; background: #f0f0f0; }
.row + .row { margin-top: 7px; }
.w82 { width: 86px; margin-right: 29px; }
.w104 { width: 104px; }
.w98 { width: 98px; }
.w59 { width: 59px; }
.w71 { width: 71px; }
.w76 { width: 76px; }
.w92 { width: 92px; }
.g-pre { margin-top: 6px; height: 228px; }
.inner { min-width: 0; margin: 6px 5px 0 -4px; padding: 0 0 0 3px; height: 111px; color: #a0a0a0; border: 1px solid #d5dfe5; border-radius: 3px; box-shadow: inset 0 0 0 1px #fafafa; }
.inner legend { margin-left: 1px; }
.pairrow { display: grid; grid-template-columns: 97px 1fr; margin-top: 4px; }
.boxes { display: grid; grid-template-columns: 52px 50px 50px auto; row-gap: 8px; margin-top: 7px; }
.inner .boxes { grid-template-columns: 50px 50px 50px auto; margin-left: 2px; }
.g-res { margin-top: 2px; height: 115px; }
.g-res legend { margin-left: -5px; }
.g-res .pairrow { margin-top: 6px; }
.g-fault { margin-top: 10px; height: 52px; }
.faultrow { gap: 8px; padding-left: 5px; }
.row.faultrow { margin-top: 3px; }
.faultrow .btn { margin-left: 4px; }
.g-auto { margin-top: 10px; height: 68px; padding-top: 9px; }
.g-auto .row + .row { margin-top: 6px; }

.variable { width: 627px; height: 88px; margin: 2px 0 0 5px; padding: 0 0 0 9px; border: 1px solid #d5dfe5; border-radius: 3px; box-shadow: inset 0 0 0 1px #fafafa; }
.variable legend { margin-left: -7px; }
.vgrid { display: grid; grid-template-columns: 31px 70px 163px 117px 70px 72px 50px; grid-template-rows: 10px 22px 22px; gap: 7px 6px; align-items: center; }
.vgrid > label { width: 22px; }
.vgrid > .txt { width: 100%; }
.vgrid > span { padding-left: 5px; }
.more { grid-area: 2 / 7 / 4 / 8; height: 26px; margin-left: 4px; border: 2px solid #1ccfd4; background: #f2f2f2; }

.right { flex: 1; min-width: 0; margin-left: 8px; display: flex; flex-direction: column; }
.upper { flex: none; display: flex; gap: 3px; height: 403px; }

/* Vector view */
.vector { flex: none; width: 354px; padding-right: 7px; }
.vector::after { content: ""; position: absolute; inset: 0 -2px 0 auto; width: 6px; border: 1px dotted #223; border-width: 0 1px; }
.bar-tall { height: 24px; font-size: 12px; line-height: 24px; font-weight: normal; }
.plot { display: block; width: 100%; height: 185px; border: 1px solid #848484; border-left: 0; background: #fff; }
.deg { font: 12px "Liberation Sans", sans-serif; fill: #00f; }
.deg .red { fill: #f00; }
.deg .green { fill: #080; }
.vlist { height: 189px; margin-top: 1px; border: 1px solid #555; border-left: 0; background: #fff; overflow: hidden; }
.vt tr { height: 20px; }
.vt tr:first-child { height: 23px; }
.v0 { width: 60px; }
.v1 { width: 82px; }
.v2 { width: 94px; }
.v3 { width: 100px; }
.vt th, .vt td { padding: 0; text-align: center; border-right: 1px solid #eee; border-bottom: 1px solid #eee; white-space: nowrap; }
.vt th { background: linear-gradient(#fff 45%, #f3f4f6 50%); border-bottom-color: #d5d5d5; border-right-color: #dedfe1; }
.vt .l { text-align: left; padding-left: 5px; }

/* Test center */
.center { flex: 1; min-width: 0; padding: 0 3px 0 4px; display: flex; flex-direction: column; }
.center-body { flex: 1; display: flex; margin-bottom: 5px; }
.tree { flex: 1; list-style: none; border: 1px solid #828790; border-bottom: 0; padding: 2px 0 0 13px; background: #fff; }
.tree li { padding-left: 1px; background: repeating-linear-gradient(#888 0 1px, #fff 1px 2px) 0 0 / 1px 100% no-repeat; }
.tree li:first-child { background-position: 0 100%; background-size: 1px 50%; }
.tree li:last-child { background-size: 1px 50%; }
.tree label { display: flex; align-items: center; height: 24px; }
.tree label::before { content: ""; width: 14px; border-top: 1px dotted #888; }
.tree input { display: grid; place-items: center; width: 13px; height: 13px; appearance: none; border: 1px solid #8e8f8f; outline: 1px solid #fff; outline-offset: -2px; background: linear-gradient(45deg, #dfe5ee, #f8f8f8); }
.tree input:checked::before { content: ""; width: 4px; height: 8px; margin-bottom: 2px; border: solid #3c4f94; border-width: 0 2px 2px 0; transform: rotate(40deg); }
.tree svg { margin-left: 7px; }
.stopico { width: 11px; height: 11px; }
.playico { width: 10px; height: 16px; }
.tree span { line-height: 22px; margin-left: 9px; padding: 0 2px; }
.tree .cur { margin-left: 8px; background: #f0f0f0; }
.side { flex: none; width: 61px; padding-left: 2px; background: #f6f6f6; }
.side button { display: flex; align-items: center; gap: 4px; width: 100%; height: 31px; }
.side svg { flex: none; width: 22px; height: 22px; }
.all { display: flex; flex-direction: column; align-items: center; gap: 5px; margin: 18px 0 0 5px; }

/* Test view */
.view { flex: 1; display: flex; flex-direction: column; background: #fff; }
.bar-view { height: 24px; padding-top: 7px; }
.tabs { display: flex; align-items: flex-end; height: 22px; border-bottom: 1px solid #898c95; }
.tabs button { height: 19px; padding: 0 3px; border: 1px solid #898c95; border-width: 1px 1px 0 1px; background: linear-gradient(#f2f2f2 45%, #dddddd 55%, #d0d0d0); }
.tabs .cur { height: 22px; padding: 0 5px 3px 4px; border-left: 0; background: #fff; }
.results { flex: 1; margin: 2px 4px 3px 1px; border: 1px solid #828790; border-right: 0; background: #ababab; }
.rt tr { height: 23px; }
.rt tr:first-child { height: 19px; }
.rt tr:first-child th { line-height: 14px; }
.r0 { width: 39px; }
.r1 { width: 100px; }
.r2 { width: 120px; }
.r3 { width: 140px; }
.rt th, .rt td { padding: 0 3px; background: #fff; border: 1px solid #a0a0a0; border-width: 0 1px 1px 0; }
.rt th { padding-left: 7px; border-right-color: #e0e1e3; background: linear-gradient(#fff 45%, #f6f7f9 50%); }
.rt tr:not(:first-child) th { border-right-color: #a0a0a0; border-bottom-color: #e3e3e3; background: linear-gradient(90deg, #fff 25%, #f6f7f9 30%); }
.rt .hit { background: #3399ff; color: #fff; }
.ptr { display: block; width: 5px; height: 10px; }

/* Status bar */
.status { position: relative; flex: none; display: flex; height: 42px; padding: 1px 2px 0 3px; border-top: 1px solid #999; background: #f1eded; font-size: 10px; line-height: 12px; }
.leds { display: flex; gap: 2px; }
.led { display: flex; flex-direction: column; align-items: center; padding: 1px 2px; border: 1px solid #a0a0a0; border-bottom: 0; }
.led.wide { width: 81px; }
.led i { width: 22px; height: 23px; margin-bottom: 3px; background: radial-gradient(circle, #d6d6d6 0, #bbb 9px, #e9e5cd 11px); }
.binlabel { width: 49px; padding: 3px 0 0 6px; white-space: nowrap; }
.binlabel.out { width: 63px; padding: 5px 0 0 10px; color: #8a8a8a; }
.bins, .lamps { display: flex; }
.bins span { display: flex; flex-direction: column; align-items: center; width: 24px; padding-top: 7px; border: 1px solid #a8a8a8; border-bottom: 0; background: #efefef; box-shadow: inset -1px 0 #fff; }
.bins svg { width: 20px; height: 14px; margin-bottom: 4px; }
.nav { width: 24px; background: #a0a0a0; }
.nav svg { width: 6px; height: 10px; }
.nav.next { width: 18px; }
.alert { width: 36px; padding: 14px 0 0 3px; }
.lamps span { display: flex; flex-direction: column; align-items: center; width: 28px; padding-top: 5px; border-left: 1px solid #a8a8a8; background: #efefef; }
.lamps span:last-child { border-right: 1px solid #a8a8a8; }
.lamps i { width: 13px; height: 15px; margin-bottom: 5px; border-radius: 50%; background: radial-gradient(circle, #19a055, #06702f); border: 1px solid #14562c; }
.grip { width: 11px; height: 11px; margin: auto 3px 2px auto; }
.expand { width: 22px; background: #0f96e6; }
.expand svg { width: 12px; height: 20px; }
```
